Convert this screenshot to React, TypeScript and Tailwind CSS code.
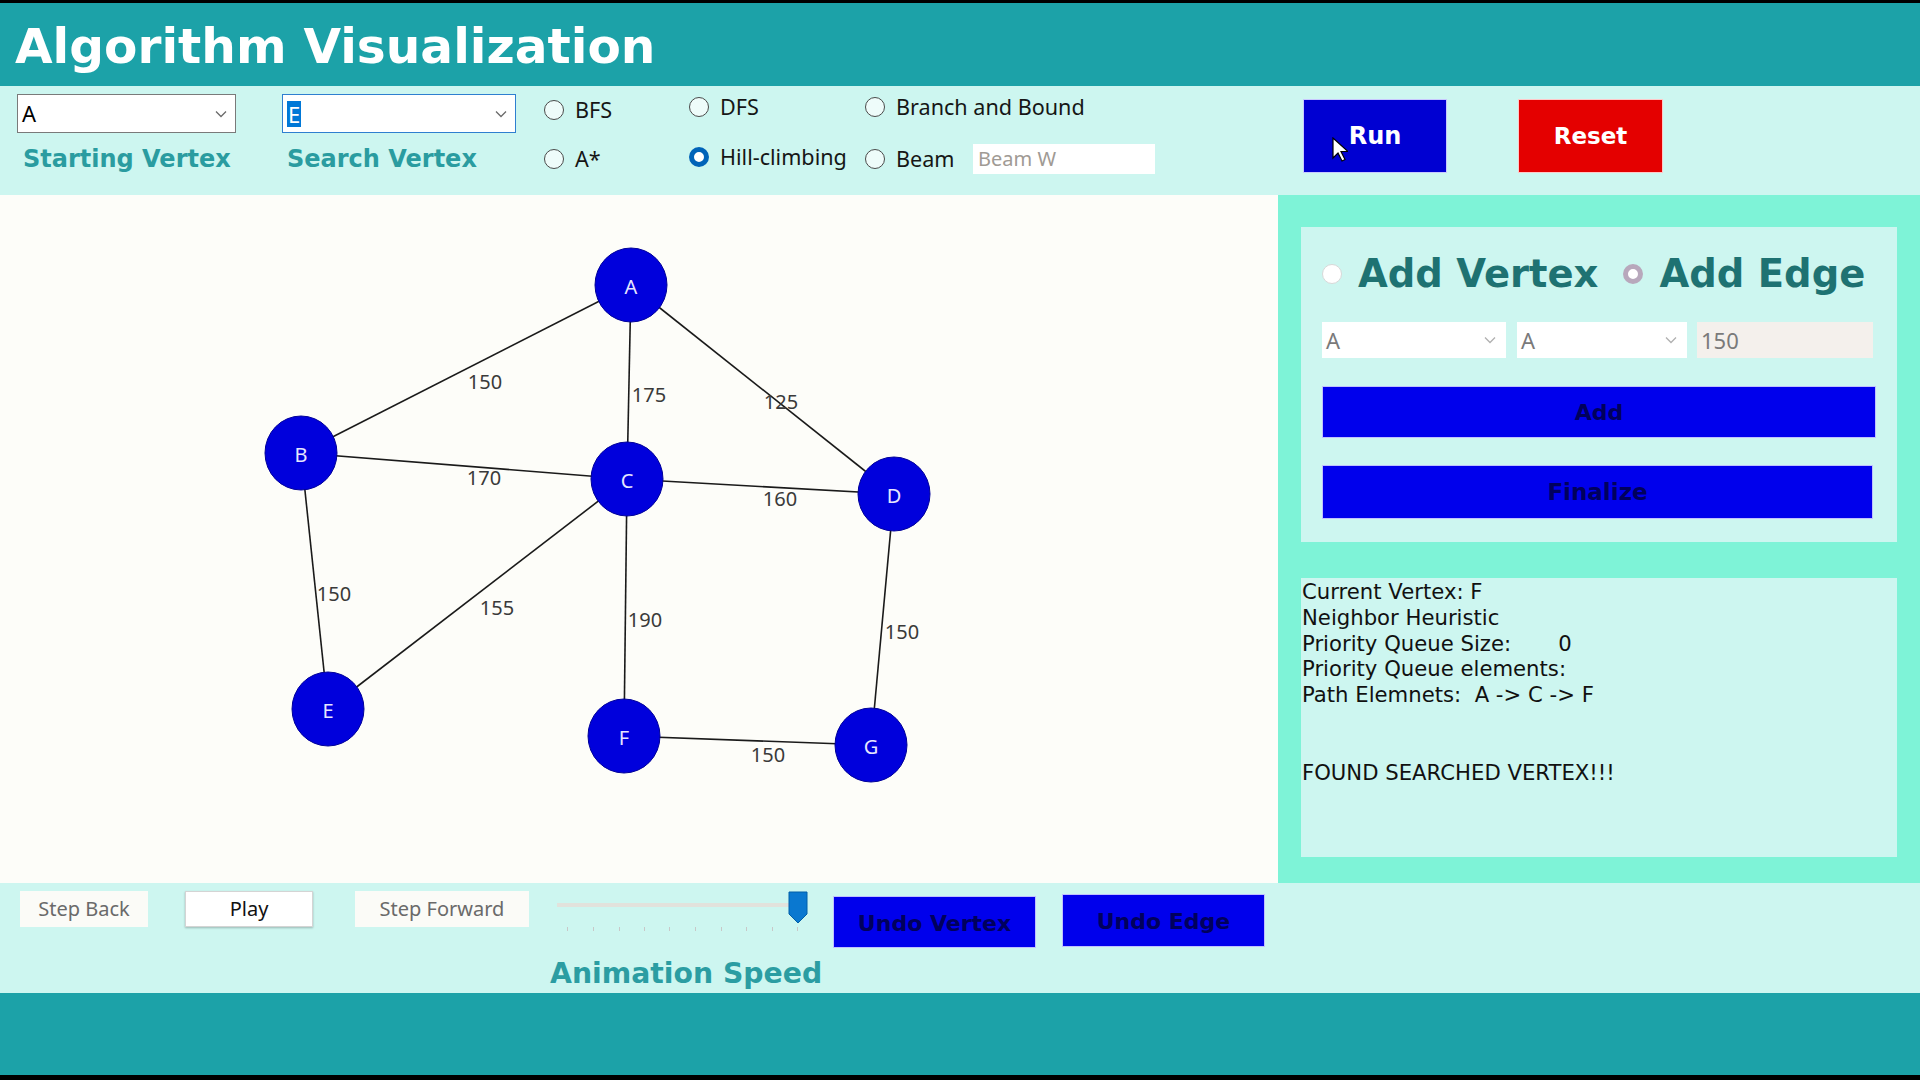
import React from "react";

const NODES: Record<string, [number, number]> = {
  A: [631, 90],
  B: [301, 258],
  C: [627, 284],
  D: [894, 299],
  E: [328, 514],
  F: [624, 541],
  G: [871, 550],
};

const EDGES: { a: string; b: string; w: number; lx: number; ly: number }[] = [
  { a: "A", b: "B", w: 150, lx: 485, ly: 187 },
  { a: "A", b: "C", w: 175, lx: 649, ly: 200 },
  { a: "A", b: "D", w: 125, lx: 781, ly: 207 },
  { a: "B", b: "C", w: 170, lx: 484, ly: 283 },
  { a: "C", b: "D", w: 160, lx: 780, ly: 304 },
  { a: "B", b: "E", w: 150, lx: 334, ly: 399 },
  { a: "C", b: "E", w: 155, lx: 497, ly: 413 },
  { a: "C", b: "F", w: 190, lx: 645, ly: 425 },
  { a: "D", b: "G", w: 150, lx: 902, ly: 437 },
  { a: "F", b: "G", w: 150, lx: 768, ly: 560 },
];

const TICKS = [10, 36, 62, 87, 112, 138, 164, 189, 215, 240];

function Chevron({ color = "#6b6b6b" }: { color?: string }) {
  return (
    <svg width="12" height="8" viewBox="0 0 12 8" fill="none" stroke={color} strokeWidth="1.3">
      <path d="M1 1.5l5 5 5-5" />
    </svg>
  );
}

function Radio({ label, checked }: { label: string; checked?: boolean }) {
  return (
    <div className="flex items-center gap-[11px] h-[28px]">
      {checked ? (
        <span className="w-[20px] h-[20px] rounded-full border-[5px] border-[#0063b8] bg-white" />
      ) : (
        <span className="w-[20px] h-[20px] rounded-full border-[1.5px] border-[#4a4a4a] bg-[#eefcfa]" />
      )}
      <span className="text-[21.6px] leading-none text-[#161616] font-['Noto_Sans',sans-serif]">{label}</span>
    </div>
  );
}

export default function App() {
  return (
    <div className="w-[1920px] h-[1080px] bg-black flex flex-col overflow-hidden">
      <div className="h-[3px] shrink-0" />

      {/* title bar */}
      <header className="h-[83px] shrink-0 bg-[#1ca2a8] pl-[15px] pt-[15px]">
        <h1 className="text-[48.6px] leading-[56px] font-bold text-white font-['DejaVu_Sans',sans-serif]">
          Algorithm Visualization
        </h1>
      </header>

      {/* toolbar */}
      <div className="h-[109px] shrink-0 bg-[#cdf6f0] flex items-start pl-[17px]">
        <div className="w-[219px] flex flex-col mt-[8px]">
          <div className="h-[39px] bg-white border border-[#7a7a7a] flex items-center justify-between pl-[4px] pr-[8px]">
            <span className="text-[22px] text-black font-['Noto_Sans',sans-serif]">A</span>
            <Chevron />
          </div>
          <span className="mt-[12px] pl-[6px] text-[24px] leading-[28px] font-bold text-[#2a9ca0] font-['DejaVu_Sans',sans-serif]">
            Starting Vertex
          </span>
        </div>

        <div className="w-[234px] ml-[46px] flex flex-col mt-[8px]">
          <div className="h-[39px] bg-white border border-[#2f7fd0] flex items-center justify-between pl-[4px] pr-[8px]">
            <span className="text-[22px] leading-[26px] px-[1px] bg-[#0078d7] text-white font-['Noto_Sans',sans-serif]">E</span>
            <Chevron />
          </div>
          <span className="mt-[12px] pl-[5px] text-[24px] leading-[28px] font-bold text-[#2a9ca0] font-['DejaVu_Sans',sans-serif]">
            Search Vertex
          </span>
        </div>

        <div className="w-[145px] ml-[28px] mt-[10px] flex flex-col gap-[21px]">
          <Radio label="BFS" />
          <Radio label="A*" />
        </div>

        <div className="w-[176px] mt-[7px] flex flex-col gap-[22px]">
          <Radio label="DFS" />
          <Radio label="Hill-climbing" checked />
        </div>

        <div className="w-[290px] mt-[7px] flex flex-col gap-[23px]">
          <Radio label="Branch and Bound" />
          <div className="flex items-center h-[30px]">
            <div className="w-[108px]">
              <Radio label="Beam" />
            </div>
            <div className="w-[182px] h-[30px] bg-white flex items-center pl-[5px]">
              <span className="text-[20px] text-[#a09a94] font-['Noto_Sans',sans-serif]">Beam W</span>
            </div>
          </div>
        </div>

        <button className="relative ml-[148px] mt-[13px] w-[144px] h-[74px] bg-[#0000d2] border border-[#c8c8ff] flex items-center justify-center">
          <span className="text-[24px] font-bold text-white font-['DejaVu_Sans',sans-serif]">Run</span>
          <svg className="absolute left-[28px] top-[37px]" width="16" height="26" viewBox="0 0 16 26">
            <path d="M1 1v20l5-5 4 8 3-1.5-4-8h7z" fill="white" stroke="black" strokeWidth="1.2" />
          </svg>
        </button>

        <button className="ml-[71px] mt-[13px] w-[145px] h-[74px] bg-[#e40000] border border-[#ffc8c8] flex items-center justify-center">
          <span className="text-[23px] font-bold text-white font-['DejaVu_Sans',sans-serif]">Reset</span>
        </button>
      </div>

      {/* main area */}
      <div className="h-[688px] shrink-0 flex">
        <div className="w-[1278px] h-full bg-[#fdfdf9]">
          <svg width="1278" height="688" viewBox="0 0 1278 688">
            {EDGES.map((e) => (
              <line
                key={e.a + e.b}
                x1={NODES[e.a][0]}
                y1={NODES[e.a][1]}
                x2={NODES[e.b][0]}
                y2={NODES[e.b][1]}
                stroke="#1a1a1a"
                strokeWidth="1.6"
              />
            ))}
            {EDGES.map((e) => (
              <text
                key={"l" + e.a + e.b}
                x={e.lx}
                y={e.ly + 7}
                textAnchor="middle"
                fontSize="20"
                fill="#3a3a3a"
                fontFamily="'Noto Sans', sans-serif"
              >
                {e.w}
              </text>
            ))}
            {Object.entries(NODES).map(([k, [x, y]]) => (
              <g key={k}>
                <ellipse cx={x} cy={y} rx="36" ry="37" fill="#0000dc" stroke="#00009a" strokeWidth="1" />
                <text
                  x={x}
                  y={y + 9}
                  textAnchor="middle"
                  fontSize="20"
                  fill="#e6e6ff"
                  fontFamily="'Noto Sans', sans-serif"
                >
                  {k}
                </text>
              </g>
            ))}
          </svg>
        </div>

        <div className="flex-1 bg-[#7ef3d7] pl-[23px] pr-[23px] pt-[32px] flex flex-col">
          <div className="h-[315px] bg-[#cdf6f0] pl-[21px] pr-[21px] flex flex-col">
            <div className="flex items-center h-[50px] mt-[22px]">
              <span className="w-[20px] h-[20px] rounded-full border border-[#d8d8d8] bg-white" />
              <span className="ml-[16px] text-[38.5px] leading-none font-bold text-[#1e7272] font-['DejaVu_Sans',sans-serif]">
                Add Vertex
              </span>
              <span className="ml-[25px] w-[20px] h-[20px] rounded-full border-[5px] border-[#b8a8bc] bg-white" />
              <span className="ml-[16px] text-[38.5px] leading-none font-bold text-[#1e7272] font-['DejaVu_Sans',sans-serif]">
                Add Edge
              </span>
            </div>

            <div className="flex items-center mt-[23px] h-[36px]">
              <div className="w-[184px] h-[36px] bg-white flex items-center justify-between pl-[4px] pr-[10px]">
                <span className="text-[22px] text-[#7a7a7a] font-['Noto_Sans',sans-serif]">A</span>
                <Chevron color="#b0b0b0" />
              </div>
              <div className="ml-[11px] w-[170px] h-[36px] bg-white flex items-center justify-between pl-[4px] pr-[10px]">
                <span className="text-[22px] text-[#7a7a7a] font-['Noto_Sans',sans-serif]">A</span>
                <Chevron color="#b0b0b0" />
              </div>
              <div className="ml-[10px] w-[176px] h-[36px] bg-[#f4f0ec] flex items-center pl-[4px]">
                <span className="text-[22px] text-[#7a7a7a] font-['Noto_Sans',sans-serif]">150</span>
              </div>
            </div>

            <button className="mt-[28px] w-[554px] h-[52px] bg-[#0000ec] border border-[#c0c0ff] flex items-center justify-center">
              <span className="text-[22px] font-bold text-[#00005c] font-['DejaVu_Sans',sans-serif]">Add</span>
            </button>
            <button className="mt-[27px] w-[551px] h-[54px] bg-[#0000ec] border border-[#c0c0ff] flex items-center justify-center">
              <span className="text-[23px] font-bold text-[#00005c] font-['DejaVu_Sans',sans-serif]">Finalize</span>
            </button>
          </div>

          <div className="mt-[36px] h-[279px] bg-[#cdf6f0] pl-[1px] pt-[1px] text-[21.2px] leading-[25.8px] text-[#111] font-['DejaVu_Sans',sans-serif] whitespace-pre">
            <div>Current Vertex: F</div>
            <div>Neighbor Heuristic</div>
            <div>{"Priority Queue Size:       0"}</div>
            <div>Priority Queue elements:</div>
            <div>{"Path Elemnets:  A -> C -> F"}</div>
            <div className="h-[25.8px]" />
            <div className="h-[25.8px]" />
            <div>FOUND SEARCHED VERTEX!!!</div>
          </div>
        </div>
      </div>

      {/* playback bar */}
      <div className="h-[110px] shrink-0 bg-[#cdf6f0] flex items-start">
        <button className="ml-[20px] mt-[8px] w-[128px] h-[36px] bg-[#fbfbf7] flex items-center justify-center">
          <span className="text-[20px] text-[#6a6a6a] font-['Noto_Sans',sans-serif]">Step Back</span>
        </button>
        <button className="ml-[37px] mt-[8px] w-[128px] h-[36px] bg-white border border-[#d4d4d4] shadow-[0_1px_2px_rgba(0,0,0,0.25)] flex items-center justify-center">
          <span className="text-[20px] text-[#111] font-['Noto_Sans',sans-serif]">Play</span>
        </button>
        <button className="ml-[42px] mt-[8px] w-[174px] h-[36px] bg-[#fbfbf7] flex items-center justify-center">
          <span className="text-[20px] text-[#6a6a6a] font-['Noto_Sans',sans-serif]">Step Forward</span>
        </button>

        <div className="ml-[21px] w-[272px] flex flex-col">
          <div className="relative ml-[7px] mt-[8px] w-[252px] h-[44px]">
            <div className="absolute left-0 top-[12px] w-[240px] h-[4px] bg-[#e2e2dc]" />
            {TICKS.map((t) => (
              <div key={t} className="absolute top-[36px] w-[1px] h-[4px] bg-[#c8c8c8]" style={{ left: t }} />
            ))}
            <svg className="absolute left-[231px] top-0" width="20" height="33" viewBox="0 0 20 33">
              <path d="M1 1h18v22l-9 9-9-9z" fill="#0a78d0" stroke="#005fa8" strokeWidth="1" />
            </svg>
          </div>
          <span className="mt-[22px] whitespace-nowrap text-[28.3px] leading-[34px] font-bold text-[#2b9da2] font-['DejaVu_Sans',sans-serif]">
            Animation Speed
          </span>
        </div>

        <button className="ml-[11px] mt-[13px] w-[203px] h-[52px] bg-[#0000ec] border border-[#c0c0ff] flex items-center justify-center pt-[2px]">
          <span className="text-[22px] font-bold text-[#00005c] font-['DejaVu_Sans',sans-serif]">Undo Vertex</span>
        </button>
        <button className="ml-[26px] mt-[11px] w-[203px] h-[53px] bg-[#0000ec] border border-[#c0c0ff] flex items-center justify-center pt-[2px]">
          <span className="text-[22px] font-bold text-[#00005c] font-['DejaVu_Sans',sans-serif]">Undo Edge</span>
        </button>
      </div>

      {/* footer */}
      <div className="h-[82px] shrink-0 bg-[#1ca2a8]" />
    </div>
  );
}
